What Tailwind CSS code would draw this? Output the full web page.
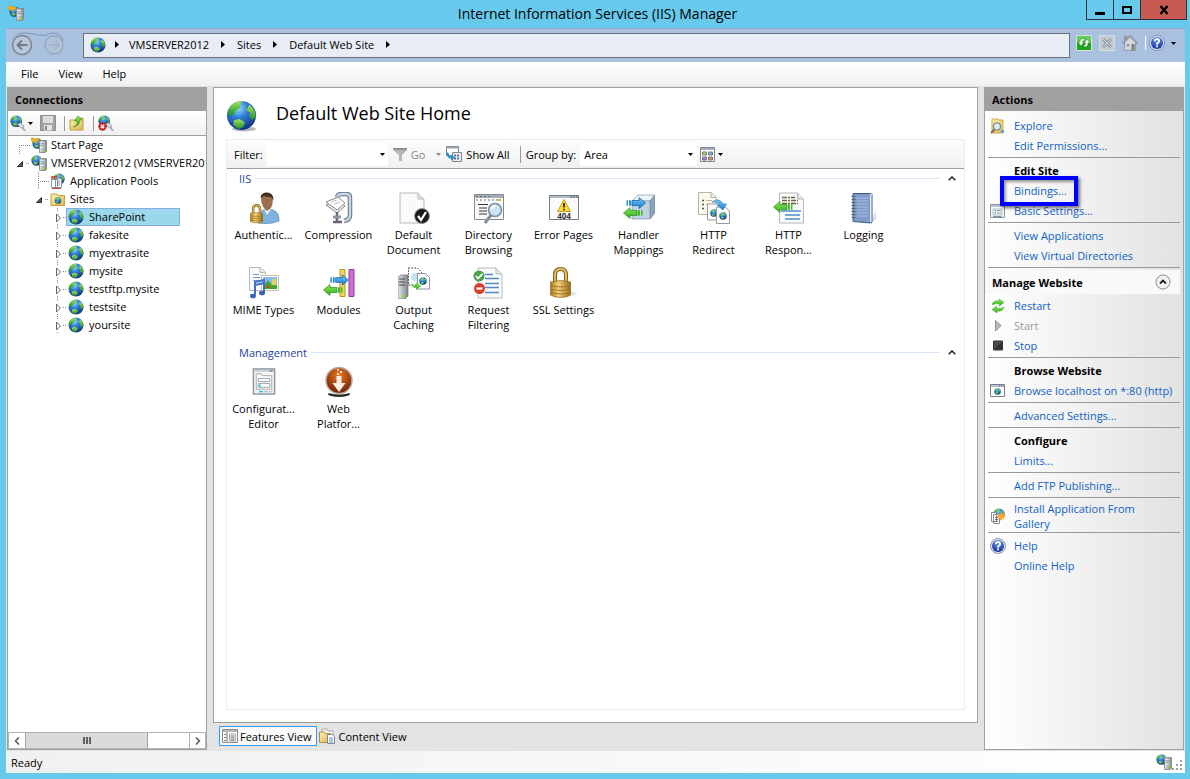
<!DOCTYPE html>
<html lang="en">
<head>
    <meta charset="UTF-8">
    <meta name="viewport" content="width=device-width, initial-scale=1.0">
    <title>Internet Information Services (IIS) Manager</title>
    <script src="https://cdn.jsdelivr.net/npm/@tailwindcss/browser@4"></script>
</head>
<body class="h-screen flex flex-col bg-[#67c9ec] pl-[6px] pr-[5px] pb-[6px] font-['Open_Sans','Noto_Sans',sans-serif] text-[11px] leading-[15px] text-black overflow-hidden">

    <!-- Shared icons -->
    <svg class="absolute w-0 h-0" aria-hidden="true">
        <defs>
            <radialGradient id="sea" cx=".4" cy=".25" r=".8"><stop offset="0" stop-color="#8fdcff"/><stop offset=".4" stop-color="#2f7fd6"/><stop offset="1" stop-color="#10287c"/></radialGradient>
            <linearGradient id="land" x2="0" y2="1"><stop offset="0" stop-color="#a4e35a"/><stop offset="1" stop-color="#1d8f2a"/></linearGradient>
            <linearGradient id="gold" x2="1" y2="0"><stop offset="0" stop-color="#a8791f"/><stop offset=".4" stop-color="#f2d37a"/><stop offset="1" stop-color="#9a6a16"/></linearGradient>
            <linearGradient id="steel" x2="1" y2="0"><stop offset="0" stop-color="#e6e8ea"/><stop offset="1" stop-color="#80868c"/></linearGradient>
            <linearGradient id="green" x2="0" y2="1"><stop offset="0" stop-color="#8fe55a"/><stop offset="1" stop-color="#2fae1c"/></linearGradient>
            <linearGradient id="blue" x2="0" y2="1"><stop offset="0" stop-color="#6fc8ff"/><stop offset="1" stop-color="#1c78cf"/></linearGradient>
            <linearGradient id="folder" x2="1" y2="1"><stop offset="0" stop-color="#fdf0b0"/><stop offset="1" stop-color="#dfb755"/></linearGradient>
            <radialGradient id="copper" cx=".5" cy=".3" r=".7"><stop offset="0" stop-color="#f07a20"/><stop offset="1" stop-color="#6b1f04"/></radialGradient>
            <radialGradient id="navy" cx=".5" cy=".2" r=".8"><stop offset="0" stop-color="#6f9cec"/><stop offset="1" stop-color="#10309c"/></radialGradient>
        </defs>
        <symbol id="globe" viewBox="0 0 16 16">
            <circle cx="8" cy="8" r="7.5" fill="url(#sea)"/>
            <path d="M3 2.5Q6 0 8.5.8L7 2.5 7.5 4 5 5.5 3.5 8 1 7.5Q1 4.500 3 2.500Z" fill="url(#land)"/>
            <path d="M12 2.500Q15.500 5 15.300 9L13.500 10.500 12 8.500 12.500 6.500 10.500 5.500Z" fill="url(#land)"/>
            <path d="M4 10.500L7 9.800 9.800 11.500 8.800 14 6.500 15 3.800 13Z" fill="url(#land)"/>
        </symbol>
        <symbol id="tower" viewBox="0 0 8 13">
            <path d="M.5 1.500L2 .500h5.500v11L6 12.500H.5z" fill="url(#steel)" stroke="#7c8288" stroke-width=".8"/>
            <path d="M1.500 3h4M1.500 5h4M1.500 7h4" stroke="#fff"/><path d="M1.500 3.800h4M1.500 5.800h4" stroke="#555" stroke-width=".6"/>
            <rect x="4.500" y="9.500" width="2" height="2" fill="#7be000"/>
        </symbol>
        <symbol id="server" viewBox="0 0 16 16">
            <use href="#globe" x="0" y="0" width="11" height="11"/>
            <use href="#tower" x="8" y="3" width="8" height="13"/>
        </symbol>
        <symbol id="start" viewBox="0 0 16 16">
            <use href="#globe" x="1" y="1" width="11" height="11"/>
            <path d="M0 1h3l1 1.500L8 1.500V4L5 4.500v2L0 3.500z" fill="#f6b621" stroke="#c8841a" stroke-width=".5"/>
            <use href="#tower" x="8" y="3" width="8" height="13"/>
        </symbol>
        <symbol id="connect" viewBox="0 0 16 16">
            <use href="#globe" x="0" y="0" width="12.500" height="12.500"/>
            <path d="M7.500 9.500l3-2 3.500 4-2.500 1.500z" fill="#dfe5ea" stroke="#6f7d8b" stroke-width=".8"/>
            <path d="M12.500 12q.5 3 3 3.500" fill="none" stroke="#8aa0b2" stroke-width="1.300"/>
        </symbol>
        <symbol id="caret" viewBox="0 0 5 3"><path d="M0 0h5L2.500 3z" fill="currentColor"/></symbol>
        <symbol id="crumb" viewBox="0 0 4 7"><path d="M0 0L4 3.500 0 7z" fill="#000"/></symbol>
        <symbol id="help" viewBox="0 0 16 16">
            <circle cx="8" cy="8" r="7.500" fill="#dfe4ee" stroke="#6d7f9f" stroke-width=".8"/>
            <circle cx="8" cy="8" r="6" fill="url(#navy)"/>
            <path d="M5.800 6.200Q5.800 4.200 8 4.200t2.200 1.900Q10.200 7.300 8 8.500v1.200" fill="none" stroke="#fff" stroke-width="1.700"/>
            <rect x="7.100" y="10.500" width="1.800" height="1.800" fill="#fff"/>
        </symbol>
        <symbol id="branch" viewBox="0 0 23 18"><path d="M11.500 0v18M13 9.500h10" stroke="#8a8a8a" stroke-dasharray="1 1" fill="none"/></symbol>
        <symbol id="branch-first" viewBox="0 0 23 18"><path d="M11.500 9v9M11 9.500h12" stroke="#8a8a8a" stroke-dasharray="1 1" fill="none"/></symbol>
        <symbol id="opened" viewBox="0 0 23 18"><path d="M18 9.500h4" stroke="#8a8a8a" stroke-dasharray="1 1"/><path d="M14.500 7.500v5h-5z" fill="#606060" stroke="#303030"/></symbol>
        <symbol id="closed" viewBox="0 0 23 18"><path d="M12.500 0v4M12.500 16v2M18 9.500h4" stroke="#8a8a8a" stroke-dasharray="1 1"/><path d="M11.500 6v8l4-4z" fill="#fff" stroke="#666"/></symbol>
        <symbol id="page" viewBox="0 0 26 32"><path d="M1 1h18l6 6v24H1z" fill="#fafafa" stroke="#b4b8bc"/><path d="M19 1v6h6" fill="#e4e4e4" stroke="#b4b8bc"/></symbol>
        <symbol id="arrow-left" viewBox="0 0 22 12"><path d="M0.500 6L7 .5V3.500h7v5H7v3z" fill="url(#green)" stroke="#249016" stroke-width=".7"/><path d="M15 3.200h2v5.600h-2zM18 3.200h1.500v5.600H18z" fill="#44b82c"/></symbol>
        <symbol id="arrow-right" viewBox="0 0 22 12"><path d="M21.500 6L15 .5v3H8v5h7v3z" fill="url(#blue)" stroke="#16609f" stroke-width=".7"/><path d="M5 3.200h2v5.600H5zM2.500 3.200H4v5.600H2.500z" fill="#2e8ed8"/></symbol>
        <symbol id="lock" viewBox="0 0 20 32">
            <path d="M4.500 15V8Q4.500 2 10 2t5.500 6v7" fill="none" stroke="#8a6418" stroke-width="4"/>
            <path d="M4.500 15V8Q4.500 2 10 2t5.500 6v7" fill="none" stroke="#e3c269" stroke-width="1.800"/>
            <path d="M0 15Q10 12 20 15v13q-10 5-20 0z" fill="url(#gold)" stroke="#8a6418" stroke-width=".7"/>
            <path d="M1 19q9 2 18 0M1 22.500q9 2 18 0M1 26q9 2 18 0" fill="none" stroke="#a27420"/>
        </symbol>
        <symbol id="form" viewBox="0 0 24 28">
            <rect x="1" y="1" width="22" height="26" fill="#f1f3f4" stroke="#8b959c" stroke-width="1.500"/>
            <path d="M2 3h20" stroke="#c8d3da" stroke-width="2"/><path d="M18 3h3" stroke="#5f7c98" stroke-width="1.500"/>
            <path d="M4 8V6h5l1 2h10v14H4z" fill="#fff" stroke="#a2a9ae"/>
            <path d="M6 11h12v3H6zM6 16h12v4H6z" fill="#fff" stroke="#9aa1a7"/><path d="M7.500 17v2.500" stroke="#38c2e8" stroke-width="2"/><path d="M7 24.500h4" stroke="#28c0ea" stroke-width="1.500"/><path d="M12 24.500h4M17 24.500h4" stroke="#b7bdc1" stroke-width="1.500"/>
        </symbol>
        <symbol id="fold" viewBox="0 0 8 5"><path d="M.7 4.300L4 1l3.300 3.300" fill="none" stroke="#222" stroke-width="1.500"/></symbol>
    </svg>

    <!-- Title bar -->
    <header class="h-7 shrink-0 flex justify-between -ml-1 -mr-[2px]">
        <div class="flex-1 pt-[5px] pl-[6px]"><svg class="w-4 h-4"><use href="#start"/></svg></div>
        <h1 class="text-[14px] leading-7">Internet Information Services (IIS) Manager</h1>
        <div class="flex-1 flex justify-end items-start">
            <button aria-label="Minimize" class="w-7 h-5 border border-t-0 border-[#2b3338] flex items-center justify-center"><svg class="w-[10px] h-[10px]"><path d="M0 7h10v3H0z"/></svg></button>
            <button aria-label="Maximize" class="w-[26px] h-5 border-y border-t-0 border-[#2b3338] flex items-center justify-center"><svg class="w-[10px] h-[10px]"><path d="M1 2h8v6H1z" fill="none" stroke="#000" stroke-width="2"/></svg></button>
            <button aria-label="Close" class="w-[47px] h-5 border border-t-0 border-[#2b3338] bg-[#c75b52] flex items-center justify-center"><svg class="w-[10px] h-[10px]"><path d="M1.500 1l7 8M8.500 1l-7 8" stroke="#000" stroke-width="2.500"/></svg></button>
        </div>
    </header>

    <!-- Address bar -->
    <div class="h-[34px] shrink-0 flex items-center bg-[#a9c0de] border-t border-[#8fa9c4] pl-1 pr-[9px] pb-px">
        <div class="w-[73px] shrink-0">
            <svg class="w-14 h-7" viewBox="0 0 56 28">
                <path d="M2 13Q3 2 14 2q7 0 14 2t14-2q10 0 11 8" fill="none" stroke="#8298b4"/>
                <circle cx="12" cy="14" r="11" fill="#b2c3d8"/><circle cx="12" cy="14" r="9.500" fill="#b7c8dc" stroke="#7b838c" stroke-width="1.500"/>
                <path d="M17.500 14H8M12 9.500L7.500 14l4.500 4.500" fill="none" stroke="#747b84" stroke-width="2"/>
                <circle cx="44" cy="14" r="9" fill="#b0c2d8" stroke="#8b9db3"/>
                <path d="M39 14h10M45 10l4 4-4 4" fill="none" stroke="#a1b1c5" stroke-width="1.500"/>
            </svg>
        </div>
        <nav aria-label="Address" class="flex-1 h-[25px] flex items-center border border-[#6b7077] bg-[#e8edf6] pl-[6px] pb-px">
            <svg class="w-4 h-4 mr-[9px]"><use href="#globe"/></svg>
            <svg class="w-1 h-[7px] mr-[10px]"><use href="#crumb"/></svg>
            <a href="#">VMSERVER2012</a>
            <svg class="w-1 h-[7px] mx-3"><use href="#crumb"/></svg>
            <a href="#">Sites</a>
            <svg class="w-1 h-[7px] mx-3"><use href="#crumb"/></svg>
            <a href="#">Default Web Site</a>
            <svg class="w-1 h-[7px] mx-3"><use href="#crumb"/></svg>
        </nav>
        <div class="flex items-center pl-[6px] gap-[7px] -mt-1">
            <button aria-label="Refresh"><svg class="w-4 h-4" viewBox="0 0 16 16"><rect x=".5" y=".5" width="15" height="15" fill="#1fa51f" stroke="#d5e5d5"/><path d="M1 1h14v7H1z" fill="#63cf58"/><path d="M8.500 3.500Q4 3 4 7H2l3 4 3-4H6.200q0-1.500 2.300-1.500zM8 12q4 .5 4-4h2l-3-4-3 4h1.800q0 2-1.800 2z" fill="#fff" stroke="#17761b" stroke-width=".5"/></svg></button>
            <button aria-label="Stop loading"><svg class="w-4 h-4" viewBox="0 0 16 16"><rect x=".5" y=".5" width="15" height="15" fill="#c4cbd3" stroke="#d7dce2"/><path d="M4 4l8 8M12 4l-8 8" stroke="#8a929b" stroke-width="2.500"/><path d="M4 4l8 8M12 4l-8 8" stroke="#d6dbe0"/></svg></button>
            <button aria-label="Home"><svg class="w-4 h-4" viewBox="0 0 16 16"><path d="M2 1h3v4H2z" fill="#8b939b"/><path d="M2.500 7v8.500h11V7L8 2z" fill="#d3d7dc" stroke="#969da5"/><path d="M.5 8.500L8 1l7.500 7.500" fill="none" stroke="#929aa3" stroke-width="1.800"/><path d="M9.500 9h3v6h-3z" fill="#767f89"/><path d="M4.500 9h3v2.500h-3z" fill="#98a1aa"/></svg></button>
            <span class="w-px h-[14px] bg-white"></span>
            <button aria-label="Help" class="flex items-center gap-[6px] -ml-1"><svg class="w-4 h-4"><use href="#help"/></svg><svg class="w-[5px] h-[3px]"><use href="#caret"/></svg></button>
        </div>
    </div>

    <!-- Menu -->
    <nav aria-label="Menu" class="h-6 shrink-0 flex items-center gap-5 pl-[15px] pb-px bg-linear-to-b from-white to-[#f0f0f0]">
        <button>File</button>
        <button>View</button>
        <button>Help</button>
    </nav>

    <main class="flex-1 min-h-0 flex gap-[6px] bg-[#e3e3e3] pt-px px-px">

        <!-- Connections -->
        <aside class="w-[200px] shrink-0 mb-px flex flex-col border border-[#a0a0a0] bg-white">
            <h2 class="h-[23px] shrink-0 bg-[#a0a0a0] font-bold leading-6 pl-[7px]">Connections</h2>
            <div class="h-[25px] shrink-0 flex items-center bg-linear-to-b from-white to-[#f0f0f0] border-b border-[#a0a0a0] pl-[2px]">
                <button aria-label="Connect" class="flex items-center gap-[2px]"><svg class="w-4 h-4"><use href="#connect"/></svg><svg class="w-[5px] h-[3px]"><use href="#caret"/></svg></button>
                <button aria-label="Save" class="ml-[7px]"><svg class="w-4 h-4" viewBox="0 0 16 16"><path d="M.5.5h15v15h-15z" fill="#a3a3a3" stroke="#8f8f8f"/><path d="M3 1h10v7H3z" fill="#dedede"/><path d="M4 10h8v5.500H4z" fill="#e5e5e5"/><path d="M5 11h2v4H5z" fill="#8b8b8b"/></svg></button>
                <span class="w-px h-[15px] bg-[#999] ml-2 mr-1"></span>
                <button aria-label="Up"><svg class="w-4 h-4" viewBox="0 0 16 16"><path d="M1 5h6l1-2h6v12H1z" fill="url(#folder)" stroke="#c19a3e"/><path d="M4 12q5-1 4-6H5.500L9 1l4 4h-2.500Q11 11 4 12z" fill="url(#green)" stroke="#2b8b20" stroke-width=".6"/></svg></button>
                <span class="w-px h-[15px] bg-[#999] ml-2 mr-1"></span>
                <button aria-label="Disconnect"><svg class="w-4 h-4" viewBox="0 0 16 16"><use href="#connect"/><circle cx="4.500" cy="11.500" r="4.200" fill="#c52a25"/><path d="M2.800 9.800l3.400 3.400M6.200 9.800l-3.400 3.400" stroke="#fff" stroke-width="1.300"/></svg></button>
            </div>
            <ul class="flex-1 min-h-0 overflow-hidden whitespace-nowrap leading-4">
                <li class="h-[18px] flex items-center"><svg class="w-[23px] h-[18px] shrink-0"><use href="#branch-first"/></svg><svg class="w-4 h-4 mr-1 shrink-0"><use href="#start"/></svg>Start Page</li>
                <li class="h-[18px] flex items-center"><svg class="w-[23px] h-[18px] shrink-0"><use href="#opened"/></svg><svg class="w-4 h-4 mr-1 shrink-0"><use href="#server"/></svg>VMSERVER2012 (VMSERVER2012\Administrator)</li>
                <li class="h-[18px] flex items-center pl-[19px]"><svg class="w-[23px] h-[18px]"><use href="#branch"/></svg><svg class="w-4 h-4 mr-1" viewBox="0 0 16 16"><use href="#globe" x="3" y="0" width="12" height="12"/><path d="M2 12V4h5" fill="none" stroke="#d33a2e" stroke-width="1.500"/><path d="M1.500 6.500h6v8h-6zM5.500 5.500h6v9h-6z" fill="#fff" stroke="#8791a0"/><path d="M7 8h3M7 10h3M7 12h3" stroke="#6f8db8"/><path d="M2 15.500h9" stroke="#c14a3c"/></svg>Application Pools</li>
                <li class="h-[18px] flex items-center pl-[19px]"><svg class="w-[23px] h-[18px]"><use href="#opened"/></svg><svg class="w-4 h-4 mr-1" viewBox="0 0 16 16"><path d="M1 3h6l1 1.500h6.500v10H1z" fill="url(#folder)" stroke="#c9a03c"/><use href="#globe" x="4.500" y="6" width="7" height="7"/></svg>Sites</li>
                <li class="h-[18px] flex items-center pl-[37px]"><svg class="w-[21px] h-[18px]"><use href="#closed" width="23" height="18"/></svg><span class="w-[114px] h-[18px] flex items-center gap-[5px] pl-px bg-[#9bd8eb] border border-[#84acdd]"><svg class="w-4 h-4"><use href="#globe"/></svg>SharePoint</span></li>
                <li class="h-[18px] flex items-center pl-[37px]"><svg class="w-[23px] h-[18px]"><use href="#closed"/></svg><svg class="w-4 h-4 mr-[5px]"><use href="#globe"/></svg>fakesite</li>
                <li class="h-[18px] flex items-center pl-[37px]"><svg class="w-[23px] h-[18px]"><use href="#closed"/></svg><svg class="w-4 h-4 mr-[5px]"><use href="#globe"/></svg>myextrasite</li>
                <li class="h-[18px] flex items-center pl-[37px]"><svg class="w-[23px] h-[18px]"><use href="#closed"/></svg><svg class="w-4 h-4 mr-[5px]"><use href="#globe"/></svg>mysite</li>
                <li class="h-[18px] flex items-center pl-[37px]"><svg class="w-[23px] h-[18px]"><use href="#closed"/></svg><svg class="w-4 h-4 mr-[5px]"><use href="#globe"/></svg>testftp.mysite</li>
                <li class="h-[18px] flex items-center pl-[37px]"><svg class="w-[23px] h-[18px]"><use href="#closed"/></svg><svg class="w-4 h-4 mr-[5px]"><use href="#globe"/></svg>testsite</li>
                <li class="h-[18px] flex items-center pl-[37px]"><svg class="w-[23px] h-[18px]"><use href="#closed"/></svg><svg class="w-4 h-4 mr-[5px]"><use href="#globe"/></svg>yoursite</li>
            </ul>
            <div class="h-[17px] shrink-0 flex border border-[#b4b4b4] bg-white">
                <button aria-label="Scroll left" class="w-4 flex items-center justify-center"><svg class="w-[6px] h-2"><path d="M5 .5L1.500 4 5 7.500" fill="none" stroke="#555" stroke-width="1.500"/></svg></button>
                <div class="w-[123px] flex items-center justify-center gap-px bg-[#dadada] border-x border-[#a6a6a6]"><span class="w-[2px] h-[7px] bg-[#606060]"></span><span class="w-[2px] h-[7px] bg-[#606060]"></span><span class="w-[2px] h-[7px] bg-[#606060]"></span></div>
                <button aria-label="Scroll right" class="w-4 ml-auto flex items-center justify-center border-l border-[#b4b4b4]"><svg class="w-[6px] h-2"><path d="M1 .5L4.500 4 1 7.500" fill="none" stroke="#555" stroke-width="1.500"/></svg></button>
            </div>
        </aside>

        <!-- Feature view -->
        <section class="flex-1 min-w-0 flex flex-col pb-[5px]">
            <div class="flex-1 min-h-0 flex flex-col border border-[#a0a0a0] bg-white px-3 pb-3">
                <div class="h-[51px] shrink-0 flex items-center gap-[18px] pt-1">
                    <svg class="w-8 h-8" viewBox="0 0 32 32"><ellipse cx="18" cy="29" rx="12" ry="2.500" fill="#bbb"/><use href="#globe" width="31" height="31"/></svg>
                    <h2 class="text-[18px] leading-6 pb-[6px]">Default Web Site Home</h2>
                </div>
                <div class="flex-1 border border-[#ececec]">
                    <div class="h-[29px] flex items-center bg-linear-to-b from-[#fdfdfd] to-[#f0f0f0] border-b border-[#a0a0a0] pl-[7px]">
                        <label for="filter">Filter:</label>
                        <div class="relative w-[121px] ml-1">
                            <input id="filter" type="text" class="block w-full h-[23px] bg-white px-1 outline-none">
                            <svg class="absolute right-[3px] top-[10px] w-[5px] h-[3px]"><use href="#caret"/></svg>
                        </div>
                        <button class="flex items-center text-[#8a8a8a] ml-[5px]"><svg class="w-[14px] h-[14px] mr-1" viewBox="0 0 14 14"><path d="M0 1h14v2L9 8v6H6V8L0 3z" fill="#b5b5b5"/><path d="M0 1h14v2H1z" fill="#8f8f8f"/></svg>Go<svg class="w-[5px] h-[3px] ml-[11px]"><use href="#caret"/></svg></button>
                        <button class="flex items-center gap-1 ml-[5px]"><svg class="w-4 h-4" viewBox="0 0 16 16"><path d="M.5.5h12v9H.5z" fill="#fff" stroke="#7d868f"/><path d="M.5 1.500h12" stroke="#9ba4ae" stroke-width="2"/><path d="M6.500 6.500h9v9h-9z" fill="#eee" stroke="#7d868f"/><path d="M8 9.500h6M8 12.500h6" stroke="#666b93" stroke-width="2" stroke-dasharray="2 1"/><path d="M1.500 6.500q0 5 4 5" fill="none" stroke="#1f8fd6" stroke-width="2"/><path d="M5 8.500l4 3-4 3z" fill="#1f8fd6"/></svg>Show All</button>
                        <span class="w-px h-[17px] bg-[#999] ml-[10px] mr-[5px]"></span>
                        <label for="group">Group by:</label>
                        <div class="relative w-[117px] ml-1">
                            <select id="group" class="block w-full h-[23px] appearance-none bg-white pl-1 outline-none"><option>Area</option><option>Category</option><option>No Grouping</option></select>
                            <svg class="absolute right-[4px] top-[10px] w-[5px] h-[3px]"><use href="#caret"/></svg>
                        </div>
                        <button aria-label="View" class="flex items-center gap-[3px] ml-[3px]"><svg class="w-[15px] h-[15px]" viewBox="0 0 15 15"><path d="M.5.5h14v14H.5z" fill="#fff" stroke="#85858d"/><path d="M1 2h13" stroke="#9fb0c3" stroke-width="2"/><path d="M2.500 5h4v3h-4z" fill="#c4d458" stroke="#777"/><path d="M8.500 5h4v3h-4z" fill="#66bde2" stroke="#777"/><path d="M2.500 10h4v3h-4z" fill="#9389cf" stroke="#777"/><path d="M8.500 10h4v3h-4z" fill="#e49080" stroke="#777"/></svg><svg class="w-[5px] h-[3px]"><use href="#caret"/></svg></button>
                    </div>

                    <div class="h-[18px] flex items-center gap-1 pl-3 pr-2 text-[#1e3f9e]">
                        <h3>IIS</h3><span class="flex-1 h-px bg-[#d6e5f5] mr-1"></span>
                        <button aria-label="Collapse IIS"><svg class="w-2 h-[5px]"><use href="#fold"/></svg></button>
                    </div>
                    <ul class="grid grid-cols-[repeat(auto-fill,75px)] auto-rows-[75px] text-center -ml-px mt-px">
                        <li class="flex flex-col items-center pt-1"><svg class="w-8 h-8 mb-[3px] shrink-0" viewBox="0 0 32 32"><path d="M10 31q-1-13 9-14 11 0 12 9v3q-9 4-21 2z" fill="#7fb2de" stroke="#5a8dbd" stroke-width=".7"/><path d="M16 17l3 6 4-6z" fill="#eef6fc"/><path d="M13 5q0-4 6-4t6 5q0 11-6 13-6-4-6-14z" fill="#9c6f4c"/><path d="M12.500 6Q13 .5 19 .5T25.500 8L23 5q-5 0-7-1z" fill="#3d3028"/><use href="#lock" x="2" y="12" width="13" height="20"/></svg>Authentic...</li>
                        <li class="flex flex-col items-center pt-1"><svg class="w-8 h-8 mb-[3px] shrink-0" viewBox="0 0 32 32"><path d="M14 5q1-3 5-3h4q4 0 4 4v17q0 5-6 6" fill="none" stroke="#5f7286" stroke-width="4.500"/><path d="M14 5q1-3 5-3h4q4 0 4 4v17q0 5-6 6" fill="none" stroke="#c9d6e4" stroke-width="2.500"/><path d="M3 13l12-5 7 6-8 7z" fill="#e9e9e9" stroke="#888"/><path d="M3 10l12-5 7 6-8 7z" fill="#fff" stroke="#888"/><path d="M8 10l6-2M11 12l6-2" stroke="#bbb"/><path d="M14 20v9M10 30h9" stroke="#667" stroke-width="2.500"/><path d="M10 25h8" stroke="#8b97a5" stroke-width="3"/></svg>Compression</li>
                        <li class="flex flex-col items-center pt-1"><svg class="w-8 h-8 mb-[3px] shrink-0" viewBox="0 0 32 32"><use href="#page" x="1" y="0" width="26" height="32"/><circle cx="24" cy="24" r="7.500" fill="#1c1c1c" stroke="#9b9b9b"/><path d="M20 24l3 4 5-8" fill="none" stroke="#fff" stroke-width="2.200"/></svg>Default<br>Document</li>
                        <li class="flex flex-col items-center pt-1"><svg class="w-8 h-8 mb-[3px] shrink-0" viewBox="0 0 32 32"><path d="M1.500 2.500h29v25h-29z" fill="#fafafa" stroke="#84898e"/><path d="M2 4.500h28" stroke="#a5aeb6" stroke-width="3"/><path d="M3 4.500h16M3 8h24" stroke="#677685" stroke-dasharray="2 2"/><path d="M25 8h3" stroke="#d8bc30" stroke-width="2"/><path d="M5 12.500h10M6 16h8M6 19h8M6 22h8" stroke="#333"/><path d="M18 23l-6 8" stroke="#8a8f94" stroke-width="3"/><circle cx="22" cy="18" r="6.500" fill="#c9e5f7" stroke="#7e8f9e" stroke-width="1.500"/><path d="M18.500 17q1-3 4-3" stroke="#fff" stroke-width="2" fill="none"/></svg>Directory<br>Browsing</li>
                        <li class="flex flex-col items-center pt-1"><svg class="w-8 h-8 mb-[3px] shrink-0" viewBox="0 0 32 32"><path d="M1.500 3.500h29v24h-29z" fill="#fbfbfb" stroke="#777c82"/><path d="M2 5h28" stroke="#b1bcc8" stroke-width="2"/><path d="M22 5h8" stroke="#525c66" stroke-dasharray="2 1"/><path d="M16 7.500l6.500 12h-13z" fill="#fbd92e" stroke="#c89e12"/><path d="M16 11v4.500M16 16.800v1.500" stroke="#222" stroke-width="1.700"/><text x="16" y="26.500" text-anchor="middle" font-size="8" font-weight="bold" fill="#333">404</text></svg>Error Pages</li>
                        <li class="flex flex-col items-center pt-1"><svg class="w-8 h-8 mb-[3px] shrink-0" viewBox="0 0 32 32"><path d="M9 9l6-6h17l-5 6z" fill="#edf4fa" stroke="#8296ab" stroke-width=".7"/><path d="M27 9l5-6v18l-5 6z" fill="#8ba4bf" stroke="#71879d" stroke-width=".7"/><path d="M9 9h18v18H9z" fill="#bfd0e2" stroke="#8296ab" stroke-width=".7"/><use href="#arrow-right" x="1" y="5" width="22" height="12"/><use href="#arrow-left" x="0" y="15" width="22" height="12"/></svg>Handler<br>Mappings</li>
                        <li class="flex flex-col items-center pt-1"><svg class="w-8 h-8 mb-[3px] shrink-0" viewBox="0 0 32 32"><path d="M.5.500h13l5 5v17H.5z" fill="#fdfaea" stroke="#b4b4aa"/><path d="M13 .5v5h5" fill="#eee" stroke="#b4b4aa"/><path d="M4 8.500h2M4 12.500h2M4 16.500h2" stroke="#555" stroke-width="1.500"/><path d="M8 8.500h6M8 12.500h4" stroke="#c2b88c"/><path d="M9.500 12h10l3 3v13h-13z" fill="#fff" stroke="#999"/><use href="#globe" x="12" y="17" width="8" height="8"/><path d="M18.500 15h9l4 4v12.500h-13z" fill="#fff" stroke="#999"/><use href="#globe" x="21" y="20" width="8" height="8"/><path d="M14 10q7-5 11 2h3.500L25 18l-6-5h3q-3-4-8-3z" fill="url(#blue)" stroke="#2575b6" stroke-width=".6"/></svg>HTTP<br>Redirect</li>
                        <li class="flex flex-col items-center pt-1"><svg class="w-8 h-8 mb-[3px] shrink-0" viewBox="0 0 32 32"><use href="#page" x="5" y="0" width="27" height="32"/><path d="M9 5.500h13M9 8.500h16M9 11.500h16" stroke="#706337" stroke-width="1.500" stroke-dasharray="5 1 2 1"/><path d="M8 19h20M12 23h15M12 27h15" stroke="#4a90cc" stroke-width="1.300"/><use href="#arrow-left" x="0" y="9" width="22" height="12"/></svg>HTTP<br>Respon...</li>
                        <li class="flex flex-col items-center pt-1"><svg class="w-8 h-8 mb-[3px] shrink-0" viewBox="0 0 32 32"><path d="M22 30l6-2V19z" fill="#dcdcdc"/><path d="M5 1.500h18l1 1V30l-1 1-18-1.500z" fill="#7e9bca" stroke="#3f5787"/><path d="M22 2h1.500v28L22 30.500z" fill="#e4e8ef"/><path d="M9 6h11M9 9h11M9 12h11M9 15h11M9 18h11M9 21h11M9 24h11" stroke="#a9c0e3"/><path d="M3.500 4.500h4M3.500 7.500h4M3.500 10.500h4M3.500 13.500h4M3.500 16.500h4M3.500 19.500h4M3.500 22.500h4M3.500 25.500h4" stroke="#5c6370" stroke-width="1.200"/></svg>Logging</li>
                        <li class="flex flex-col items-center pt-1"><svg class="w-8 h-8 mb-[3px] shrink-0" viewBox="0 0 32 32"><path d="M1.500.500h11l5 5v18h-16z" fill="#fafafa" stroke="#b4b8bc"/><path d="M12 .5v5h5" fill="#eee" stroke="#b4b8bc"/><path d="M5 7.500h6M5 10.500h7M5 13.500h7" stroke="#739ac9"/><path d="M13.500 8.500h17v15h-17z" fill="#fff" stroke="#c9c0a8"/><path d="M15 10h14v12H15z" fill="#8bb8ef"/><path d="M15 20l5-7 4 5h5v4H15z" fill="#47a52d"/><path d="M24 12h4v6h-4z" fill="#ead35a"/><path d="M18 21q2-5 4 0z" fill="#c9402b"/><path d="M7 28V15l9-2v13M7 18l9-2" fill="none" stroke="#3d6fc8" stroke-width="2"/><ellipse cx="5" cy="29" rx="3" ry="2.300" fill="#3766c0"/><ellipse cx="14" cy="26" rx="3" ry="2.300" fill="#3766c0"/></svg>MIME Types</li>
                        <li class="flex flex-col items-center pt-1"><svg class="w-8 h-8 mb-[3px] shrink-0" viewBox="0 0 32 32"><path d="M17 2.500h5v27h-5z" fill="#f1d75c" stroke="#b59723"/><path d="M26 2.500h5v27h-5z" fill="#cf6fd0" stroke="#8e3c94"/><use href="#arrow-right" x="5" y="7" width="21" height="12"/><use href="#arrow-left" x="0" y="17" width="22" height="12"/></svg>Modules</li>
                        <li class="flex flex-col items-center pt-1"><svg class="w-8 h-8 mb-[3px] shrink-0" viewBox="0 0 32 32"><path d="M0 10l3-2h7v21l-3 3H0z" fill="url(#steel)" stroke="#6f757b" stroke-width=".7"/><path d="M1 12h6M1 15h6M1 18h6" stroke="#444"/><path d="M4 29h3" stroke="#71dc22" stroke-width="2"/><path d="M10.500 1h9l4 4v13h-13z" fill="#fff" stroke="#333" stroke-dasharray="1.500 1.500"/><circle cx="17" cy="10" r="4" fill="#c3e3f3"/><path d="M19.500 6.500h8l4 4V22h-12z" fill="#fff" stroke="#8e9298"/><use href="#globe" x="21" y="10" width="8" height="8"/><path d="M13 16q2 3 5 2v-3l5 4-5 4v-2q-4 0-5-5z" fill="url(#green)"/></svg>Output<br>Caching</li>
                        <li class="flex flex-col items-center pt-1"><svg class="w-8 h-8 mb-[3px] shrink-0" viewBox="0 0 32 32"><use href="#page" x="4" y="0" width="26" height="32"/><path d="M12 7.500h8M12 11.500h14M12 16.500h14M12 20.500h14M12 25.500h14" stroke="#5188c6" stroke-width="1.300"/><circle cx="6" cy="9" r="5.500" fill="#49a348"/><path d="M3 9l2 2.500L9.500 7" fill="none" stroke="#fff" stroke-width="1.800"/><circle cx="6.500" cy="21.500" r="5.500" fill="#d93e2c"/><path d="M3.500 21.500h6" stroke="#fff" stroke-width="2.200"/></svg>Request<br>Filtering</li>
                        <li class="flex flex-col items-center pt-1"><svg class="w-8 h-8 mb-[3px] shrink-0" viewBox="0 0 32 32"><path d="M18 31l12-4-8-4z" fill="#e6e6e6"/><use href="#lock" x="2" y="0" width="21" height="32"/></svg>SSL Settings</li>
                    </ul>

                    <div class="h-[18px] flex items-center gap-1 mt-[5px] pl-3 pr-2 text-[#1e3f9e]">
                        <h3>Management</h3><span class="flex-1 h-px bg-[#d6e5f5] mr-1"></span>
                        <button aria-label="Collapse Management"><svg class="w-2 h-[5px]"><use href="#fold"/></svg></button>
                    </div>
                    <ul class="grid grid-cols-[repeat(auto-fill,75px)] auto-rows-[75px] text-center -ml-px mt-px">
                        <li class="flex flex-col items-center pt-1"><svg class="w-8 h-8 mb-[3px] shrink-0" viewBox="0 0 32 32"><use href="#form" x="4" y="2" width="24" height="27"/></svg>Configurat...<br>Editor</li>
                        <li class="flex flex-col items-center pt-1"><svg class="w-8 h-8 mb-[3px] shrink-0" viewBox="0 0 32 32"><ellipse cx="16" cy="28" rx="11" ry="3" fill="#2b2b2b"/><ellipse cx="16" cy="25.500" rx="12" ry="3" fill="#fff"/><circle cx="16" cy="14.500" r="13" fill="url(#copper)" stroke="#b9aaa2" stroke-width="1.500"/><path d="M13.500 10h5v7h4L16 26l-6.500-9h4z" fill="#fbeee2"/><path d="M14 7h2v2h-2zM17 5h2v2h-2zM14 3h2v1.500h-2z" fill="#fbeee2"/></svg>Web<br>Platfor...</li>
                    </ul>
                </div>
            </div>
            <div class="h-[23px] shrink-0 flex items-end gap-[2px] pl-[6px]">
                <button class="h-5 flex items-center gap-[2px] border border-[#3399ff] bg-[#fafafa] pl-[2px] pr-[5px]"><svg class="w-4 h-4" viewBox="0 0 16 16"><path d="M.5 1.500h15v13H.5z" fill="#fff" stroke="#868a8e"/><path d="M1 3h14M5 4v11" stroke="#9ba1a7" stroke-width="1.500"/><path d="M2 6.500h2M2 9.500h2M2 12.500h2" stroke="#777"/><path d="M7.500 6h6v7h-6z" fill="#fff" stroke="#aaa"/><path d="M8.500 8h4M8.500 10h4M8.500 12h4" stroke="#666"/></svg>Features View</button>
                <button class="h-5 flex items-center gap-[3px]"><svg class="w-4 h-4" viewBox="0 0 16 16"><path d="M3 1h5l1 2h5v10H3z" fill="#f5f5f5" stroke="#aaa"/><path d="M.5 4h5l1 1.500h5v9H.5z" fill="url(#folder)" stroke="#b38f3e"/><path d="M8.500 6.500h5l2 2v7h-7z" fill="#fff" stroke="#7e8a97"/><path d="M10 10h4M10 12h4M10 14h4" stroke="#5e93c8"/></svg>Content View</button>
            </div>
        </section>

        <!-- Actions -->
        <aside class="w-[200px] shrink-0 mb-px border border-[#a0a0a0] bg-linear-to-r from-white to-[#e2e2e2] text-[#0f62c4]">
            <h2 class="h-[23px] bg-[#a0a0a0] text-black font-bold leading-6 pl-[7px]">Actions</h2>
            <div class="pl-[3px] pr-[3px] pt-[5px] leading-5">
                <a href="#" class="h-5 flex items-center gap-2 pl-[2px]"><svg class="w-4 h-4" viewBox="0 0 16 16"><path d="M2 1h6l1 1h4v13H2z" fill="url(#folder)" stroke="#d1aa48"/><path d="M11 12h3v3h-3z" fill="#5da6d8"/><path d="M5 11l-4 4" stroke="#87694b" stroke-width="2"/><circle cx="7" cy="8.500" r="3.500" fill="#d9eefa" stroke="#75838f" stroke-width="1.200"/></svg>Explore</a>
                <a href="#" class="h-5 flex items-center pl-[26px]">Edit Permissions...</a>
                <hr class="border-[#9a9a9a] mt-px mb-[3px]">
                <h3 class="h-5 pl-[26px] text-black font-bold">Edit Site</h3>
                <div class="relative"><a href="#" class="h-5 flex items-center pl-[26px]">Bindings...</a><span class="absolute z-10 left-[12px] -top-[5px] w-[78px] h-[30px] border-4 border-[#0000ff] shadow-[2px_2px_3px_#0008,inset_2px_2px_3px_#0006] pointer-events-none"></span></div>
                <a href="#" class="h-5 flex items-center gap-2 pl-[2px]"><svg class="w-4 h-4" viewBox="0 0 16 16"><path d="M.5 1.500h14v13H.5z" fill="#f5f7f8" stroke="#8594a2"/><path d="M1 3h13" stroke="#b3c3d1" stroke-width="2"/><path d="M3 6h9v6H3z" fill="#fff" stroke="#99a1a9" stroke-width=".7"/><path d="M4.500 7.500h1.500M4.500 10h1.500" stroke="#2da7de" stroke-width="1.500"/><path d="M7 7.500h4M7 10h4M3 13.500h9" stroke="#87919b"/></svg>Basic Settings...</a>
                <hr class="border-[#9a9a9a] mt-px mb-[3px]">
                <a href="#" class="h-5 flex items-center pl-[26px]">View Applications</a>
                <a href="#" class="h-5 flex items-center pl-[26px]">View Virtual Directories</a>
                <hr class="border-[#9a9a9a] mt-px mb-[2px]">
            </div>
            <div class="h-6 flex items-center justify-between bg-[#f9f9f9] pl-[7px] pr-[9px] mb-[2px] mr-[3px] text-black"><h3 class="font-bold">Manage Website</h3><button aria-label="Collapse"><svg class="w-4 h-4" viewBox="0 0 16 16"><circle cx="8" cy="8" r="7" fill="#f2f2f2" stroke="#8c8c8c"/><path d="M5 9.500l3-3 3 3" fill="none" stroke="#222" stroke-width="1.800"/></svg></button></div>
            <div class="pl-[3px] pr-[3px] leading-5">
                <a href="#" class="h-5 flex items-center gap-2 pl-[2px]"><svg class="w-4 h-4" viewBox="0 0 16 16"><path d="M2 7q1-5 7-4V1l5 3.500L9.500 8V6Q5 5 2 7z" fill="url(#green)" stroke="#4aa838" stroke-width=".5"/><path d="M14 9q-1 5-7 4v2l-5-3.500L6.500 8v2q4.500 1 7.500-1z" fill="url(#green)" stroke="#4aa838" stroke-width=".5"/></svg>Restart</a>
                <button disabled class="h-5 flex items-center gap-2 pl-[2px] text-[#9a9a9a]"><svg class="w-4 h-4" viewBox="0 0 16 16"><path d="M5.500 2.500v10.500l5.500-5.500z" fill="#bcbcbc" stroke="#8e8e8e"/></svg>Start</button>
                <a href="#" class="h-5 flex items-center gap-2 pl-[2px]"><svg class="w-4 h-4" viewBox="0 0 16 16"><path d="M3.500 3h9v9h-9z" fill="#4a4a4a" stroke="#333"/><path d="M4 11.500L12 4v7.500z" fill="#303030"/></svg>Stop</a>
                <hr class="border-[#9a9a9a] mt-px mb-[3px]">
                <h3 class="h-5 pl-[26px] text-black font-bold">Browse Website</h3>
                <a href="#" class="h-5 flex items-center gap-2 pl-[2px] whitespace-nowrap"><svg class="w-4 h-4 shrink-0" viewBox="0 0 16 16"><path d="M.5 1.500h14v12H.5z" fill="#fff" stroke="#777f88"/><path d="M1 3h13" stroke="#b9c3cd" stroke-width="2"/><path d="M9 3h5" stroke="#59636e" stroke-dasharray="1 1"/><use href="#globe" x="4" y="5" width="7" height="7"/></svg>Browse localhost on *:80 (http)</a>
                <hr class="border-[#9a9a9a] mt-px mb-[3px]">
                <a href="#" class="h-5 flex items-center pl-[26px]">Advanced Settings...</a>
                <hr class="border-[#9a9a9a] mt-px mb-[3px]">
                <h3 class="h-5 pl-[26px] text-black font-bold">Configure</h3>
                <a href="#" class="h-5 flex items-center pl-[26px]">Limits...</a>
                <hr class="border-[#9a9a9a] mt-px mb-[3px]">
                <a href="#" class="h-5 flex items-center pl-[26px]">Add FTP Publishing...</a>
                <hr class="border-[#9a9a9a] mt-px mb-[3px]">
                <a href="#" class="flex items-center gap-2 pl-[2px] leading-[15px]"><svg class="w-4 h-4 shrink-0" viewBox="0 0 16 16"><use href="#globe" x="3" y="0" width="12" height="12"/><path d="M1.500 4.500h5v9h-5zM3.500 6.500h6v9h-6z" fill="#fff" stroke="#838c98"/><path d="M5 9.500h3M5 11.500h3M5 13.500h3" stroke="#555" stroke-width=".8"/><path d="M11 4l1 2 2-.5-.5 2 2.500 1-2.500 1 .5 2-2-.5-1 2-1-2-2 .5.5-2-2-1 2-1-.5-2 2 .5z" fill="#f8a833"/></svg><span>Install Application From<br>Gallery</span></a>
                <hr class="border-[#9a9a9a] mt-px mb-[3px]">
                <a href="#" class="h-5 flex items-center gap-2 pl-[2px]"><svg class="w-4 h-4"><use href="#help"/></svg>Help</a>
                <a href="#" class="h-5 flex items-center pl-[26px]">Online Help</a>
            </div>
        </aside>
    </main>

    <!-- Status bar -->
    <footer class="h-[22px] shrink-0 flex items-center justify-between bg-linear-to-r from-[#f0f0f0] to-white pl-[5px] pr-[3px]">
        <span>Ready</span>
        <span class="flex items-end"><svg class="w-4 h-4"><use href="#server"/></svg><svg class="w-[10px] h-[10px]" viewBox="0 0 10 10"><path d="M8 0h2v2H8zM4 4h2v2H4zM8 4h2v2H8zM0 8h2v2H0zM4 8h2v2H4zM8 8h2v2H8z" fill="#a0a0a0"/></svg></span>
    </footer>
</body>
</html>
